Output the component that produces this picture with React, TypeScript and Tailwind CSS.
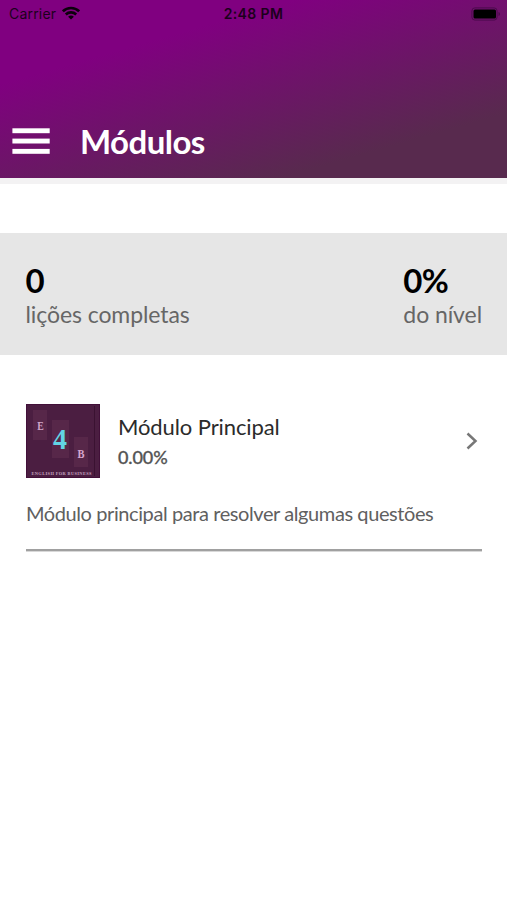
function WifiIcon() {
  return (
    <svg className="ml-[6px] -mt-[2px] h-[14px] w-[18px]" viewBox="0 0 18 14" fill="none" stroke="#0c000c" strokeWidth="2.6">
      <path d="M0.9 5.3C5.4 0.9 12.6 0.9 17.1 5.3" />
      <path d="M3.8 8.5C6.7 5.7 11.3 5.7 14.2 8.5" />
      <path d="M9 13.6L6.1 10.8C7.8 9.2 10.2 9.2 11.9 10.8Z" fill="#0c000c" stroke="none" />
    </svg>
  );
}

function StatusBar() {
  return (
    <div className="grid h-7 grid-cols-3 items-center font-['Inter','Liberation_Sans',sans-serif] text-[14px] leading-none text-[#1c001c]">
      <div className="flex items-center pl-[9px]">
        <span className="tracking-[0.2px]">Carrier</span>
        <WifiIcon />
      </div>
      <span className="text-center font-semibold tracking-[0.4px]">2:48 PM</span>
      <div className="flex justify-end pr-[6px]">
        <svg className="-mt-px h-[14px] w-[30px]" viewBox="0 0 30 14">
          <rect x="0.9" y="0.9" width="25.2" height="12.2" rx="3" fill="none" stroke="#4c0b4d" strokeWidth="1" />
          <rect x="2.5" y="2.5" width="22.5" height="9" rx="1.5" fill="#000" />
          <path d="M27.5 5c2 .5 2 3.5 0 4z" fill="#4c0b4d" />
        </svg>
      </div>
    </div>
  );
}

function Header() {
  return (
    <header className="flex h-[178px] flex-col bg-[linear-gradient(164deg,#800080_26%,#582a4e_80%)]">
      <StatusBar />
      <div className="mt-[87px] flex h-[52px] items-center pl-3">
        <svg className="h-[26px] w-[38px]" viewBox="0 0 38 26" fill="#fff">
          <rect x="0.4" y="0.3" width="37.3" height="4.9" />
          <rect x="0.4" y="10.6" width="37.3" height="4.9" />
          <rect x="0.4" y="20.9" width="37.3" height="4.9" />
        </svg>
        <h1 className="ml-[30px] text-[33px] leading-[40px] font-bold tracking-[-0.55px] text-white">Módulos</h1>
      </div>
    </header>
  );
}

function Stat({ value, label }: { value: string; label: string }) {
  return (
    <div>
      <div className="text-[33px] leading-[35px] font-bold tracking-[-0.8px] text-black">{value}</div>
      <div className="text-[23px] leading-[33px] tracking-[-0.08px] text-[#666]">{label}</div>
    </div>
  );
}

function ModuleCover() {
  return (
    <svg className="h-[74px] w-[74px]" viewBox="0 0 74 74" fontFamily="'Liberation Serif', serif" textAnchor="middle">
      <rect width="74" height="74" fill="#4b1e41" />
      <rect x="7" y="6" width="14" height="30" fill="#572749" />
      <rect x="26" y="16" width="17" height="38" fill="#572749" />
      <rect x="48" y="33" width="14" height="30" fill="#572749" />
      <path d="M68.5 2v70" stroke="#3a1231" strokeWidth="1" />
      <rect x="0.5" y="0.5" width="73" height="73" fill="none" stroke="#421039" />
      <text x="14.5" y="25.5" fontSize="12.5" fontWeight="700" fill="#d0a5c9" textLength="6.5" lengthAdjust="spacingAndGlyphs">E</text>
      <text x="34" y="45" fontSize="29" fontWeight="700" fill="#62d5e5" textLength="14" lengthAdjust="spacingAndGlyphs">4</text>
      <text x="55" y="53.5" fontSize="12.5" fontWeight="700" fill="#d5a5ce" textLength="7" lengthAdjust="spacingAndGlyphs">B</text>
      <text x="35.5" y="70.5" fontSize="4.4" fontWeight="700" fill="#c7a5c2" textLength="60">ENGLISH FOR BUSINESS</text>
    </svg>
  );
}

function ModuleItem() {
  return (
    <article className="mx-[26px] mt-[49px]">
      <div className="flex items-center">
        <ModuleCover />
        <div className="ml-[18px] flex-1 pt-[2px]">
          <h2 className="text-[22px] leading-[30px] tracking-[-0.1px] text-[#2b2b2b]">Módulo Principal</h2>
          <div className="text-[18px] leading-[30px] font-medium tracking-[-0.1px] text-[#555] [-webkit-text-stroke:0.3px_#555]">0.00%</div>
        </div>
        <svg className="mr-[3px] h-[18px] w-[12px]" viewBox="0 0 12 18" fill="none" stroke="#777" strokeWidth="2.5">
          <path d="M1.5 1.5L9.5 9L1.5 16.5" />
        </svg>
      </div>
      <p className="mt-[19px] h-[52px] text-[20px] leading-[32px] tracking-[-0.41px] whitespace-nowrap text-[#606060]">
        Módulo principal para resolver algumas questões
      </p>
      <div className="-mr-px h-[2px] bg-[#a0a0a0] shadow-[0_1px_0_#d8d8d8]" />
    </article>
  );
}

export default function App() {
  return (
    <main className="h-[900px] w-[507px] overflow-hidden bg-white font-['Lato',sans-serif]">
      <Header />
      <div className="h-[6px] bg-[#f3f2f3]" />
      <section className="mt-[49px] flex h-[122px] justify-between bg-[#e6e6e6] pt-[30px] pr-[25px] pl-[25.5px]">
        <Stat value="0" label="lições completas" />
        <Stat value="0%" label="do nível" />
      </section>
      <ModuleItem />
    </main>
  );
}
